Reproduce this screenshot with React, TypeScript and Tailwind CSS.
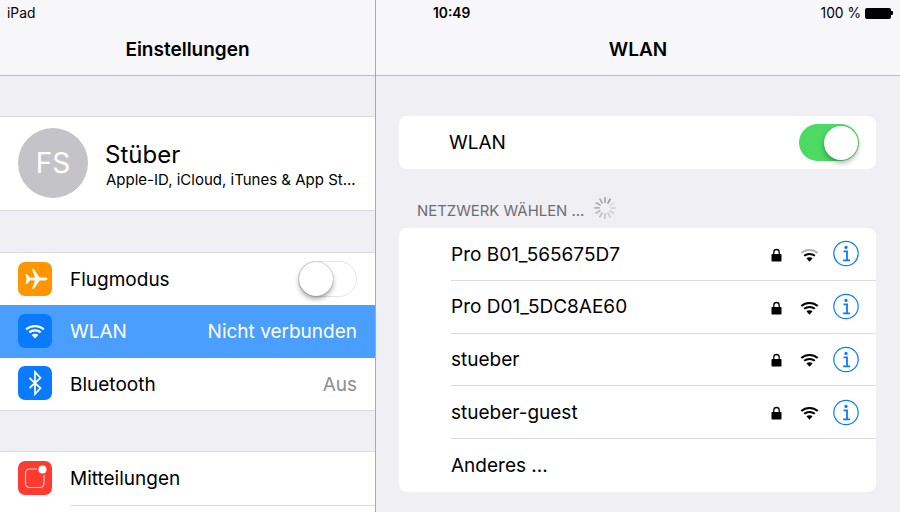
const font = { fontFamily: "Inter, 'Liberation Sans', sans-serif" };

function Plane() {
  return (
    <svg viewBox="0 0 34 34" className="w-[34px] h-[34px]">
      <path fill="#fff" d="M7.500 12.200L9 11.900L12 15.700L17 15.600L14 7.300L15.800 7L21.600 15.600L27 15.600C28.400 15.600 29.500 16.200 29.500 17C29.500 17.800 28.400 18.400 27 18.400L21.600 18.400L15.800 27L14 26.700L17 18.400L12 18.300L9 22.100L7.500 21.800L8.600 17Z" />
    </svg>
  );
}

function Wifi({ color = "#000", outer = "#000", className = "" }: { color?: string; outer?: string; className?: string }) {
  return (
    <svg viewBox="0 0 20 15" className={className}>
      <path d="M1.200 5.400C6 1 14 1 18.800 5.400" fill="none" stroke={outer} strokeWidth="2.200" />
      <path d="M4.300 8.400C7.500 5.700 12.500 5.700 15.700 8.400" fill="none" stroke={color} strokeWidth="2.200" />
      <path fill={color} d="M6.700 11C8.600 9.400 11.400 9.400 13.300 11L10 14.600z" />
    </svg>
  );
}

function Bluetooth() {
  return (
    <svg viewBox="0 0 34 34" className="w-[34px] h-[34px]">
      <path d="M11.500 12l11 10L17 28V6l5.500 6L11.500 22" fill="none" stroke="#fff" strokeWidth="1.700" />
    </svg>
  );
}

function Notif() {
  return (
    <svg viewBox="0 0 34 34" className="w-[34px] h-[34px]">
      <rect x="7.500" y="8" width="18.500" height="18.500" rx="4" fill="none" stroke="#fff" strokeOpacity="0.8" strokeWidth="1.100" />
      <circle cx="24.500" cy="8.500" r="5.800" fill="#ff3b30" />
      <circle cx="24.500" cy="8.500" r="4" fill="#fff" />
    </svg>
  );
}

function Lock() {
  return (
    <svg viewBox="0 0 11 14" className="w-[11px] h-[14px] mt-[2px]">
      <path d="M2.800 6.500V4.200a2.700 2.700 0 015.400 0v2.300" fill="none" stroke="#000" strokeWidth="1.300" />
      <rect x="0.500" y="6" width="10" height="7.500" rx="0.800" fill="#000" />
    </svg>
  );
}

function Info() {
  return (
    <svg viewBox="0 0 26 27" className="w-[26px] h-[27px]">
      <circle cx="13" cy="13.500" r="12.200" fill="none" stroke="#0a7aff" strokeWidth="1.200" />
      <circle cx="13" cy="7.400" r="1.600" fill="#0a7aff" />
      <path d="M10.500 11.300h3.500v8.700M10.100 20.300h7" fill="none" stroke="#0a7aff" strokeWidth="1.800" />
    </svg>
  );
}

function Spinner() {
  const spokes = Array.from({ length: 12 }, (_, i) => i);
  return (
    <svg viewBox="0 0 24 24" className="w-[24px] h-[24px] mb-[3px]">
      {spokes.map((i) => (
        <rect
          key={i}
          x="11.200"
          y="1"
          width="1.700"
          height="6"
          rx="0.800"
          fill="#8e8e93"
          opacity={0.2 + ((i + 10) % 12) * 0.06}
          transform={`rotate(${i * 30} 12 12)`}
        />
      ))}
    </svg>
  );
}

function Switch({ on }: { on: boolean }) {
  return on ? (
    <div className="w-[60px] h-[37px] rounded-full bg-[#4cd964] flex items-center justify-end pr-[1px]">
      <div className="w-[34px] h-[34px] rounded-full bg-white shadow-[0_3px_5px_rgba(0,0,0,0.3)]" />
    </div>
  ) : (
    <div className="w-[59px] h-[36px] rounded-full bg-white border border-[#e5e5e7] flex items-center pl-[0px]">
      <div className="w-[34px] h-[34px] rounded-full bg-white shadow-[0_3px_5px_rgba(0,0,0,0.35),0_0_1px_rgba(0,0,0,0.5)]" />
    </div>
  );
}

function Header({ title, children }: { title: string; children: React.ReactNode }) {
  return (
    <div className="h-[76px] shrink-0 bg-[#f7f7f9] border-b border-[#bdbdc3] flex flex-col">
      <div className="h-[26px] flex items-center text-[13.800px] text-black">{children}</div>
      <div className="h-[48px] flex items-center justify-center text-[19px] font-semibold text-black">{title}</div>
    </div>
  );
}

function SettingRow({
  icon,
  color,
  label,
  selected,
  value,
  children,
}: {
  icon: React.ReactNode;
  color: string;
  label: string;
  selected?: boolean;
  value?: string;
  children?: React.ReactNode;
}) {
  return (
    <div className={`h-[52.400px] flex items-center pl-[18px] pr-[18px] ${selected ? "bg-[#4a9ffe] text-white" : "text-black"}`}>
      <div className="w-[34px] h-[34px] -mt-[1px] rounded-[7px] flex items-center justify-center overflow-hidden" style={{ backgroundColor: color }}>
        {icon}
      </div>
      <div className="ml-[18px] pt-[2px] text-[19px] flex-1">{label}</div>
      {value && <div className={`pt-[2px] text-[19px] ${selected ? "text-white" : "text-[#8e8e93]"}`}>{value}</div>}
      {children}
    </div>
  );
}

function Network({ name, weak }: { name: string; weak?: boolean }) {
  return (
    <div className="h-[52.800px] pl-[52px] flex">
      <div className="flex-1 flex items-center border-b border-[#dcdce0] pr-[17px]">
        <div className="flex-1 pt-[2px] text-[19px] text-black">{name}</div>
        <Lock />
        <div className="w-[19px] ml-[18px] mr-[14px] mt-[2px] flex">
          <Wifi outer={weak ? "#b5b5b5" : "#000"} className="w-[19px] h-[14px]" />
        </div>
        <Info />
      </div>
    </div>
  );
}

export default function App() {
  return (
    <div style={font} className="w-[900px] h-[512px] overflow-hidden flex bg-[#efeff4]">
      <div className="w-[376px] shrink-0 border-r border-[#a9a9ae] flex flex-col">
        <Header title="Einstellungen">
          <span className="ml-[7px]">iPad</span>
        </Header>
        <div className="h-[40px] shrink-0" />
        <div className="h-[95px] shrink-0 bg-white border-y border-[#dcdce0] flex items-center pl-[18px] pb-[1px]">
          <div className="w-[70px] h-[70px] rounded-full bg-[#c4c4c8] text-white text-[28px] flex items-center justify-center">FS</div>
          <div className="ml-[17px] mt-[3px] flex flex-col">
            <div className="text-[24px] leading-[30px] text-black">Stüber</div>
            <div className="ml-[1px] text-[15px] leading-[20px] text-black whitespace-nowrap">Apple-ID, iCloud, iTunes &amp; App St...</div>
          </div>
        </div>
        <div className="h-[41px] shrink-0" />
        <div className="bg-white border-y border-[#dcdce0]">
          <SettingRow icon={<Plane />} color="#ff9500" label="Flugmodus">
            <Switch on={false} />
          </SettingRow>
          <SettingRow
            icon={<Wifi color="#fff" outer="#fff" className="w-[20px] h-[15px]" />}
            color="#0a7aff"
            label="WLAN"
            selected
            value="Nicht verbunden"
          />
          <SettingRow icon={<Bluetooth />} color="#0a7aff" label="Bluetooth" value="Aus" />
        </div>
        <div className="h-[40px] shrink-0" />
        <div className="bg-white border-t border-[#dcdce0] flex-1">
          <SettingRow icon={<Notif />} color="#ff3b30" label="Mitteilungen" />
          <div className="ml-[70px] border-t border-[#dcdce0]" />
        </div>
      </div>

      <div className="flex-1 flex flex-col">
        <Header title="WLAN">
          <span className="ml-[57px] font-semibold">10:49</span>
          <div className="ml-auto mr-[7px] flex items-center gap-[4px]">
            <span>100 %</span>
            <div className="flex items-center">
              <div className="w-[26px] h-[11px] rounded-[2px] bg-black" />
              <div className="w-[2px] h-[4px] rounded-r-[1px] bg-black" />
            </div>
          </div>
        </Header>
        <div className="pl-[23px] pr-[24px] pt-[40px] flex flex-col">
          <div className="h-[53px] bg-white rounded-[8px] flex items-center pl-[50px] pr-[17px]">
            <div className="flex-1 pt-[2px] text-[19px] text-black">WLAN</div>
            <Switch on />
          </div>
          <div className="h-[59px] flex items-end pb-[5px] pl-[18px] gap-[9px]">
            <span className="text-[14.900px] text-[#6d6d72] leading-[24px]">NETZWERK WÄHLEN ...</span>
            <Spinner />
          </div>
          <div className="bg-white rounded-[8px] overflow-hidden">
            <Network name="Pro B01_565675D7" weak />
            <Network name="Pro D01_5DC8AE60" />
            <Network name="stueber" />
            <Network name="stueber-guest" />
            <div className="h-[53px] pl-[52px] pt-[2px] flex items-center text-[19px] text-black">Anderes ...</div>
          </div>
        </div>
      </div>
    </div>
  );
}
